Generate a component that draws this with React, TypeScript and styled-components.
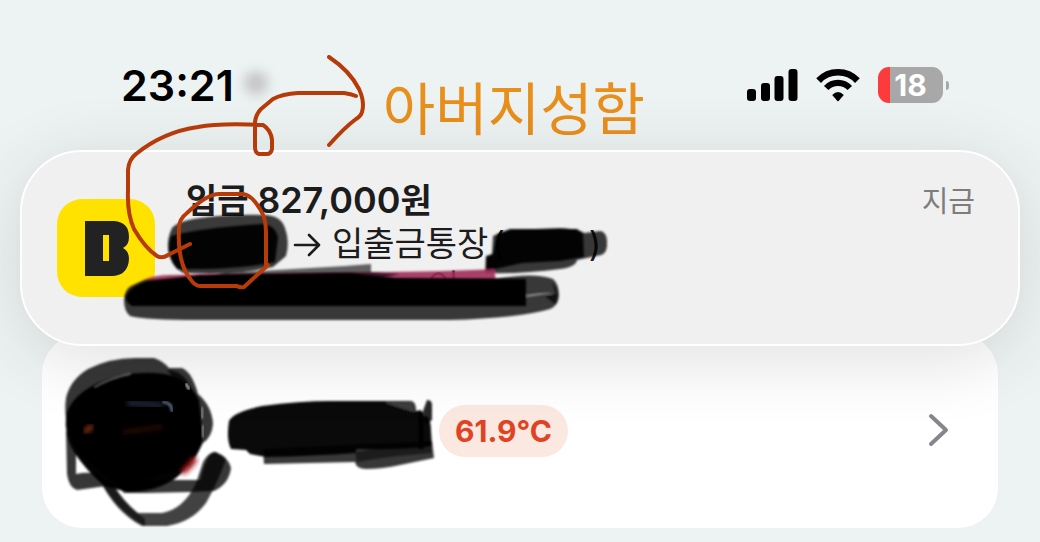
import React from "react";
import styled, { createGlobalStyle } from "styled-components";

const GlobalStyle = createGlobalStyle`
  * { box-sizing: border-box; }
  body {
    margin: 0;
    background: #edf3f3;
    font-family: Inter, "Noto Sans CJK KR", sans-serif;
  }
`;

const Page = styled.main`
  position: relative;
  min-height: 100vh;
  overflow: hidden;
  background: #edf3f3;
`;

const StatusBar = styled.header`
  display: flex;
  align-items: flex-start;
  padding: 63px 91px 11px 121px;
`;

const Clock = styled.time`
  font-size: 43px;
  line-height: 44px;
  font-weight: 600;
  color: #000;
`;

const LocationGlow = styled.span`
  width: 24px;
  height: 24px;
  margin: 8px 0 0 10px;
  border-radius: 12px;
  background: rgba(70, 50, 60, 0.24);
  filter: blur(6px);
`;

const Note = styled.p`
  margin: 18px 0 0 115px;
  font-size: 57px;
  line-height: 58px;
  font-weight: 400;
  color: #e88f1c;
  white-space: nowrap;
`;

const Indicators = styled.div`
  display: flex;
  align-items: center;
  height: 44px;
  gap: 18px;
  margin-left: auto;
`;

const Battery = styled.div`
  display: flex;
  align-items: center;
  gap: 3px;
`;

const BatteryBody = styled.div`
  width: 65px;
  height: 36px;
  border-radius: 11px;
  background: linear-gradient(to right, #fd3a3c 12px, #a8a8a8 12px);
  color: #fff;
  font-size: 30px;
  line-height: 36px;
  font-weight: 700;
  text-align: center;
`;

const BatteryTip = styled.span`
  width: 3px;
  height: 9px;
  border-radius: 0 3px 3px 0;
  background: #a8a8a8;
`;

const Notification = styled.article`
  position: relative;
  z-index: 1;
  display: flex;
  align-items: flex-start;
  gap: 31px;
  margin: 0 20px;
  padding: 27px 43px 36px 35px;
  border: 2px solid #fff;
  border-radius: 62px;
  background: #f0f0f0;
  box-shadow: 0 12px 70px rgba(40, 20, 40, 0.14);
`;

const AppIcon = styled.svg`
  flex: none;
  width: 98px;
  height: 98px;
  margin-top: 20px;
`;

const Message = styled.div`
  flex: 1;
  font-size: 34px;
  line-height: 43px;
  color: #1c1c1c;
  white-space: nowrap;
`;

const Title = styled.h2`
  margin: 0;
  font-size: 34px;
  line-height: 43px;
  font-weight: 600;
`;

const Amount = styled.span`
  font-size: 36px;
`;

const Line = styled.p`
  display: flex;
  gap: 4px;
  margin: 0;
`;

const Hidden = styled.span<{ $width: number }>`
  flex: none;
  width: ${(p) => p.$width}px;
`;

const Received = styled.time`
  font-size: 29px;
  line-height: 45px;
  color: #7d7d7d;
`;

const Profile = styled.section`
  display: flex;
  align-items: center;
  margin: -12px 42px 0;
  padding: 0 49px 0 22px;
  border-radius: 40px;
  background: #fff;
`;

const AvatarScribble = styled.svg`
  flex: none;
  width: 162px;
  height: 194px;
  overflow: visible;
`;

const NameScribble = styled.svg`
  flex: none;
  width: 213px;
  height: 72px;
  overflow: visible;
`;

const Temperature = styled.span`
  padding: 0 16px;
  border-radius: 26px;
  background: #fae8e1;
  color: #e04322;
  font-size: 30px;
  line-height: 52px;
  font-weight: 700;
`;

const OpenButton = styled.button`
  display: flex;
  margin-left: auto;
  padding: 0;
  border: 0;
  background: none;
  cursor: pointer;
`;

const Markup = styled.svg`
  position: absolute;
  z-index: 2;
  top: 0;
  left: 0;
  width: 1040px;
  height: 542px;
  pointer-events: none;
`;

function Signal() {
  return (
    <svg width="51" height="34" viewBox="0 0 51 34" aria-label="signal">
      <rect x="0" y="21" width="9" height="12" rx="3" />
      <rect x="14" y="15" width="9" height="18" rx="3" />
      <rect x="27.500" y="8" width="9" height="25" rx="3" />
      <rect x="41.500" y="1" width="9" height="32" rx="3" />
    </svg>
  );
}

function Wifi() {
  return (
    <svg width="44" height="34" viewBox="0 0 44 34" aria-label="wifi">
      <g fill="none" stroke="#000">
        <path d="M2.600 12.600A26.800 26.800 0 0 1 41.400 12.600" strokeWidth="6.600" />
        <path d="M10.200 20A16.200 16.200 0 0 1 33.800 20" strokeWidth="6.200" />
      </g>
      <path d="M16.200 27Q22 21.200 27.800 27L22.600 32.900Q22 33.500 21.400 32.900Z" />
    </svg>
  );
}

function Avatar() {
  return (
    <AvatarScribble viewBox="64 334 162 194" aria-hidden="true">
      <defs>
        <filter id="soft" x="-10%" y="-10%" width="120%" height="120%">
          <feGaussianBlur stdDeviation="0.8" />
        </filter>
        <filter id="glow" x="-60%" y="-60%" width="220%" height="220%">
          <feGaussianBlur stdDeviation="2.500" />
        </filter>
      </defs>
      <g filter="url(#soft)">
        <path d="M66 398Q70 380 88 369Q110 358 135 358H154Q163 361 169 368H182Q192 372 198 394Q212 406 213 424Q212 437 203 443L190 466L120 488L80 455Q62 425 66 398Z" fill="#000" opacity=".79" />
        <path d="M66 430L76 454V474Q90 471 101 475L106 486Q92 488 77 490Q69 488 67 474Z" fill="#000" opacity=".79" />
        <path d="M114 482L150 480H200Q207 452 215 452Q228 456 231 468Q229 484 214 491Q165 493 124 493Z" fill="#000" opacity=".78" />
        <path d="M100 479L113 484Q124 502 138 513H162Q184 509 196 483L203 462Q209 451 216 452L226 459Q219 480 206 503Q192 522 167 526H142Q119 514 104 488Z" fill="#000" opacity=".74" />
        <path d="M103 478L112 484Q124 505 145 519V526Q122 515 103 486Z" fill="#000" opacity=".6" />
        <path d="M66 415Q72 395 98 383Q130 369 164 374Q188 378 199 400L203 438Q200 458 176 478Q156 492 128 492L104 486Q84 468 74 452Q64 436 66 415Z" fill="#000" opacity=".99" />
        <path d="M167 370Q183 370 191 388L198 400L182 388Z" fill="#000" opacity=".75" />
      </g>
      <g fill="none" strokeLinecap="round">
        <path d="M95 387Q110 378 130 374" stroke="#bbb" strokeWidth="2" opacity=".5" filter="url(#soft)" />
        <path d="M186 384L189 389" stroke="#ddd" strokeWidth="2" filter="url(#soft)" />
        <path d="M202 408L202 418M203 426V437" stroke="#aaa" strokeWidth="2" opacity=".8" filter="url(#soft)" />
        <path d="M163 402Q172 403 172 411" stroke="#536279" strokeWidth="3" filter="url(#soft)" />
        <path d="M86 431L91 427" stroke="#8a3010" strokeWidth="5" filter="url(#glow)" />
        <path d="M184 471Q190 466 194 460" stroke="#a3161e" strokeWidth="6" filter="url(#glow)" />
        <path d="M125 432L160 427" stroke="#300c06" strokeWidth="6" opacity=".6" filter="url(#glow)" />
        <path d="M130 403L160 405" stroke="#2a3248" strokeWidth="7" opacity=".7" filter="url(#glow)" />
      </g>
    </AvatarScribble>
  );
}

function RedactedName() {
  return (
    <NameScribble viewBox="226 394 213 72" aria-hidden="true">
      <g filter="url(#soft)">
        <path d="M263 448L264 463Q310 462 355 461Q356 468 366 468Q382 468 400 464L434 457L432 440Z" fill="#000" opacity=".78" />
        <path d="M229 420Q233 411 262 405Q300 400 330 400H411Q416 401 416 410L421 409L424 415Q431 415 431 430L432 445Q400 449 357 448L355 452Q315 455 266 456L250 453L246 449L231 448Q226 438 229 420Z" fill="#000" opacity=".96" />
        <path d="M427 399Q432 399 432 404V419L426 423L423 410Z" fill="#000" opacity=".85" />
        <path d="M421 411V448" stroke="#000" strokeWidth="5" />
        <path d="M386 401H411Q415 402 415 411Q402 408 386 402Z" fill="#777" opacity=".45" />
        <path d="M356 456Q390 450 431 447" stroke="#000" strokeWidth="10" opacity=".5" fill="none" />
      </g>
    </NameScribble>
  );
}

function Annotations() {
  return (
    <Markup viewBox="0 0 1040 542" aria-hidden="true">
      <g filter="url(#soft)">
        <path d="M172 228Q178 221 200 218Q230 214 266 215Q281 216 285 228Q290 242 286 256L273 267Q240 274 210 274L183 273Q171 267 168 250Q167 238 172 228Z" fill="#000" opacity=".76" />
        <path d="M171 236Q200 228 262 224Q276 225 278 238L275 262Q240 270 177 269Q165 254 171 236Z" fill="#000" opacity=".94" />

        <path d="M486 256L492 254L493 236Q500 232 512 230L560 228Q580 229 584 233L601 231Q608 233 607 246Q606 254 601 255L577 260Q576 267 560 269Q525 274 485 273Z" fill="#000" opacity=".77" />
        <path d="M497 234L510 229L577 229L583 234L584 257L560 261L522 263L486 271V257L493 254Z" fill="#000" opacity=".94" />

        <path d="M142 282Q146 276 170 275L250 274L371 272Q440 272 494 269L496 281H142Z" fill="#a02c56" opacity=".9" />
        <path d="M225 273L345 266L371 264V272L400 274L371 281L190 282Z" fill="#000" opacity=".6" />
        <path d="M124 300Q125 289 131 286L144 280L495 279Q535 272 553 279Q559 284 559 296Q558 306 550 309Q520 318 450 320H200Q145 320 130 316Q124 311 124 300Z" fill="#000" opacity=".77" />
      </g>
      <g filter="url(#soft)">
        <path d="M126 296Q130 286 148 281L200 275L350 273L395 278L526 279V306H132Q125 302 126 296Z" fill="#000" opacity=".99" />
        <path d="M527 295Q545 292 553 293L527 297Z" fill="#aaa" opacity=".8" />
        <path d="M552 283Q561 292 555 304L545 296L556 294Z" fill="#000" opacity=".7" />
      </g>
      <g fill="none" stroke="#b63b08" strokeWidth="4" strokeLinecap="round" strokeLinejoin="round">
        <path d="M190 244L168 255Q162 259 157 256Q145 248 134 229Q127 214 128 190L128 170Q129 159 136 154Q163 132 198 127Q219 123 263 125Q271 130 272 140V149Q271 154 267 154H259Q255 153 255 147V122Q256 114 261 109L273 99Q282 94 298 93H344Q351 94 356 96" />
        <path d="M329 57Q350 71 359 89Q365 102 362 112Q361 116 356 119Q344 128 329 145" />
        <path d="M268 265L244 287Q240 288 237 286H200Q195 286 191 280Q177 263 179 228Q179 219 187 213Q207 194 219 194H242Q251 194 260 209Q266 218 266 232V265" />
      </g>
    </Markup>
  );
}

export default function App() {
  return (
    <Page>
      <GlobalStyle />
      <StatusBar>
        <Clock>23:21</Clock>
        <LocationGlow />
        <Note lang="ko">아버지성함</Note>
        <Indicators>
          <Signal />
          <Wifi />
          <Battery>
            <BatteryBody>18</BatteryBody>
            <BatteryTip />
          </Battery>
        </Indicators>
      </StatusBar>
      <Notification lang="ko">
        <AppIcon viewBox="0 0 98 98" aria-hidden="true">
          <rect width="98" height="98" rx="25" fill="#ffe200" />
          <path fillRule="evenodd" fill="#222" d="M28 22H57Q72 23 72 38Q72 46 66 49Q72 52 72 60Q71 76 56 77H28ZM46 36V62H52V36Z" />
        </AppIcon>
        <Message>
          <Title>
            입금 <Amount>827,000</Amount>원
          </Title>
          <Line>
            <Hidden $width={102} />
            <svg width="36" height="43" viewBox="0 0 36 43" aria-label="to">
              <path d="M3 23H26M17 13L27 23L17 33" fill="none" stroke="#1c1c1c" strokeWidth="2.600" strokeLinecap="round" strokeLinejoin="round" />
            </svg>
            <span>입출금통장</span>
            <span>(</span>
            <Hidden $width={76} />
            <span>)</span>
          </Line>
          <Line>
            <Hidden $width={238} />
            <span>인</span>
          </Line>
        </Message>
        <Received>지금</Received>
      </Notification>
      <Profile>
        <Avatar />
        <RedactedName />
        <Temperature>61.9°C</Temperature>
        <OpenButton aria-label="Open profile">
          <svg width="22" height="36" viewBox="0 0 22 36">
            <path d="M4 3L19 17L4 31" fill="none" stroke="#85878d" strokeWidth="4" strokeLinecap="round" strokeLinejoin="round" />
          </svg>
        </OpenButton>
      </Profile>
      <Annotations />
    </Page>
  );
}
